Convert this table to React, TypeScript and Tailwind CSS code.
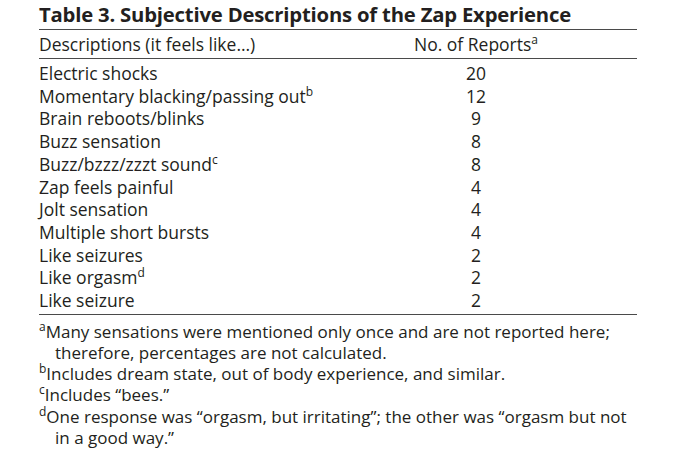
import React from 'react';

const rows: { label: string; note?: string; count: number }[] = [
  { label: 'Electric shocks', count: 20 },
  { label: 'Momentary blacking/passing out', note: 'b', count: 12 },
  { label: 'Brain reboots/blinks', count: 9 },
  { label: 'Buzz sensation', count: 8 },
  { label: 'Buzz/bzzz/zzzt sound', note: 'c', count: 8 },
  { label: 'Zap feels painful', count: 4 },
  { label: 'Jolt sensation', count: 4 },
  { label: 'Multiple short bursts', count: 4 },
  { label: 'Like seizures', count: 2 },
  { label: 'Like orgasm', note: 'd', count: 2 },
  { label: 'Like seizure', count: 2 },
];

// footnote lines are broken where the printed table breaks them
const notes: { mark: string; lines: string[] }[] = [
  { mark: 'a', lines: ['Many sensations were mentioned only once and are not reported here;', 'therefore, percentages are not calculated.'] },
  { mark: 'b', lines: ['Includes dream state, out of body experience, and similar.'] },
  { mark: 'c', lines: ['Includes \u201cbees.\u201d'] },
  { mark: 'd', lines: ['One response was \u201corgasm, but irritating\u201d; the other was \u201corgasm but not', 'in a good way.\u201d'] },
];

const Sup: React.FC<{ children: React.ReactNode }> = ({ children }) => (
  <span className="relative -top-[7px] text-[12px] leading-[0]">{children}</span>
);

export default function App() {
  return (
    <div className="min-h-screen w-[680px] bg-white text-[#231f20] [font-family:'Open_Sans',sans-serif]">
      <div className="ml-[39px] w-[598px] pt-[1px]">
        {/* Title */}
        <h1 className="text-[20.3px] font-bold leading-[26px] tracking-[-0.2px] whitespace-nowrap">
          Table 3. Subjective Descriptions of the Zap Experience
        </h1>

        {/* Table */}
        <div className="mt-[2px] border-t-[1.5px] border-[#4a4a4a] text-[17.5px]">
          <div className="grid grid-cols-[337px_200px] border-b-[1.5px] border-[#4a4a4a] pb-[2px] pt-[2px] leading-[24px]">
            <div>Descriptions (it feels like&hellip;)</div>
            <div className="text-center">
              No. of Reports<Sup>a</Sup>
            </div>
          </div>

          <div className="border-b-[1.5px] border-[#4a4a4a] pb-[2px] pt-[3px]">
            {rows.map((r) => (
              <div key={r.label} className="grid grid-cols-[337px_200px] leading-[22.7px]">
                <div>
                  {r.label}
                  {r.note && <Sup>{r.note}</Sup>}
                </div>
                <div className="text-center">{r.count}</div>
              </div>
            ))}
          </div>
        </div>

        {/* Footnotes */}
        <div className="pt-[6px] text-[17px] leading-[21.2px]">
          {notes.map((n) => (
            <div key={n.mark}>
              {n.lines.map((line, i) => (
                <div key={i} className={`whitespace-nowrap ${i === 0 ? '' : 'pl-[16px]'}`}>
                  {i === 0 && <Sup>{n.mark}</Sup>}
                  {line}
                </div>
              ))}
            </div>
          ))}
        </div>
      </div>
    </div>
  );
}
